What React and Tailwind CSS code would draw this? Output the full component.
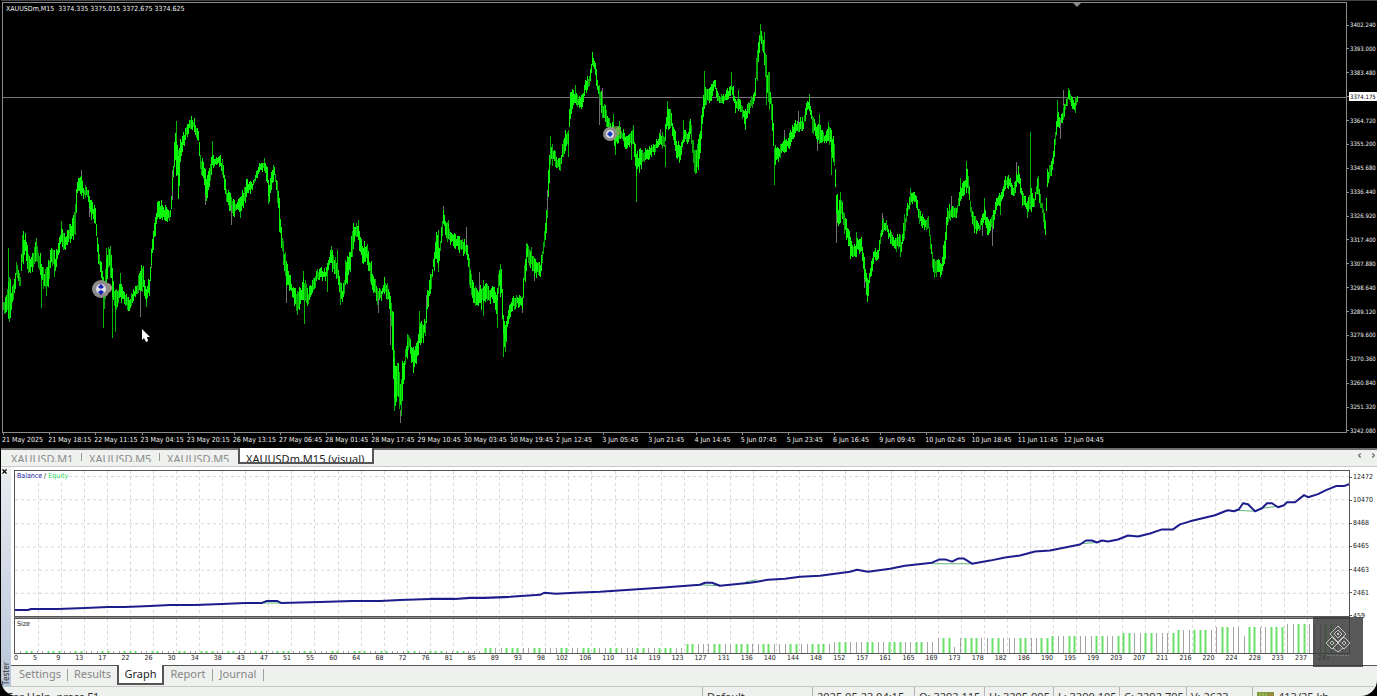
import { ChevronLeft, ChevronRight, X } from "lucide-react";

const PRICES = [
  "3402.240", "3393.000", "3383.480", "3374.175", "3364.720", "3355.200",
  "3345.680", "3336.440", "3326.920", "3317.400", "3307.880", "3298.640",
  "3289.120", "3279.600", "3270.360", "3260.840", "3251.320", "3242.080",
];
const CURRENT_PRICE = "3374.175";

const DATES = [
  "21 May 2025", "21 May 18:15", "22 May 11:15", "23 May 04:15", "23 May 20:15",
  "26 May 13:15", "27 May 06:45", "28 May 01:45", "28 May 17:45", "29 May 10:45",
  "30 May 03:45", "30 May 19:45", "2 Jun 12:45", "3 Jun 05:45", "3 Jun 21:45",
  "4 Jun 14:45", "5 Jun 07:45", "5 Jun 23:45", "6 Jun 16:45", "9 Jun 09:45",
  "10 Jun 02:45", "10 Jun 18:45", "11 Jun 11:45", "12 Jun 04:45",
];

// [x, high, low] envelope of the price bars
const ENVELOPE = [
  [3, 300, 314], [6, 295, 312], [9, 282, 315], [11, 290, 310], [13, 285, 300], [16, 262, 278],
  [20, 275, 287], [22, 237, 262], [25, 234, 252], [28, 255, 272], [31, 258, 270], [35, 245, 262],
  [38, 252, 265], [41, 260, 282], [44, 272, 290], [48, 262, 282], [51, 248, 262], [55, 255, 272],
  [58, 243, 257], [61, 225, 245], [64, 235, 248], [68, 230, 243], [72, 222, 238], [75, 200, 230],
  [77, 180, 192], [80, 172, 190], [83, 188, 197], [87, 187, 198], [90, 200, 215], [95, 210, 222],
  [97, 240, 255], [101, 265, 280], [104, 280, 305], [107, 250, 275], [110, 247, 272], [112, 270, 295],
  [114, 290, 310], [117, 290, 305], [120, 285, 298], [125, 295, 305], [129, 300, 311], [133, 290, 300],
  [137, 283, 293], [140, 270, 290], [143, 270, 288], [146, 290, 303], [149, 275, 293], [151, 250, 262],
  [154, 225, 240], [157, 205, 220], [160, 203, 216], [165, 208, 222], [170, 208, 220], [173, 165, 180],
  [175, 130, 165], [178, 150, 190], [181, 140, 157], [185, 128, 140], [190, 118, 128], [194, 120, 130],
  [198, 133, 142], [200, 155, 170], [203, 160, 180], [206, 180, 200], [209, 165, 185], [212, 155, 168],
  [215, 158, 166], [219, 155, 165], [223, 165, 180], [226, 190, 203], [230, 195, 210], [233, 200, 215],
  [236, 203, 210], [240, 200, 212], [243, 190, 205], [247, 180, 194], [252, 183, 190], [256, 172, 178],
  [260, 163, 170], [264, 162, 170], [267, 170, 185], [269, 185, 200], [272, 170, 182], [274, 168, 176],
  [277, 180, 200], [280, 215, 240], [284, 250, 275], [288, 268, 290], [292, 285, 297], [297, 295, 312],
  [301, 285, 305], [305, 280, 300], [308, 290, 305], [312, 282, 295], [316, 272, 282], [320, 268, 278],
  [325, 270, 280], [330, 252, 262], [334, 255, 275], [338, 270, 285], [342, 288, 300], [346, 265, 285],
  [350, 250, 270], [353, 225, 245], [357, 225, 235], [361, 240, 260], [366, 248, 262], [371, 265, 283],
  [377, 290, 303], [381, 288, 298], [384, 280, 292], [388, 288, 300], [391, 305, 325], [393, 325, 380],
  [395, 370, 400], [398, 365, 395], [400, 380, 413], [403, 360, 385], [406, 345, 360], [409, 335, 350],
  [413, 350, 368], [416, 345, 360], [419, 325, 345], [422, 322, 340], [425, 318, 335], [427, 290, 310],
  [431, 275, 290], [433, 255, 270], [436, 235, 260], [439, 250, 262], [443, 210, 225], [447, 225, 240],
  [452, 232, 244], [457, 238, 248], [462, 240, 252], [467, 245, 258], [469, 260, 280], [473, 285, 300],
  [478, 290, 304], [482, 285, 305], [487, 288, 302], [492, 287, 300], [496, 293, 310], [499, 270, 290],
  [501, 275, 300], [503, 315, 340], [505, 320, 345], [508, 308, 325], [512, 298, 310], [517, 297, 305],
  [522, 298, 308], [524, 265, 285], [527, 245, 262], [531, 250, 265], [535, 260, 275], [540, 265, 275],
  [542, 250, 262], [546, 215, 232], [548, 170, 200], [550, 143, 165], [553, 148, 160], [557, 160, 170],
  [560, 160, 170], [563, 140, 155], [566, 130, 145], [568, 130, 150], [570, 95, 115], [573, 90, 103],
  [577, 98, 108], [582, 96, 106], [585, 82, 92], [589, 76, 86], [592, 55, 66], [595, 62, 75],
  [598, 85, 98], [602, 98, 115], [606, 112, 125], [610, 122, 135], [615, 130, 145], [620, 127, 137],
  [625, 135, 147], [630, 136, 146], [633, 130, 145], [636, 155, 175], [640, 152, 168], [645, 150, 160],
  [650, 147, 156], [655, 142, 152], [660, 133, 142], [664, 135, 150], [667, 107, 125], [671, 115, 128],
  [676, 140, 155], [680, 148, 160], [684, 128, 140], [687, 135, 145], [690, 122, 135], [694, 150, 168],
  [697, 150, 172], [700, 130, 150], [703, 95, 115], [706, 90, 103], [710, 90, 102], [714, 78, 88],
  [718, 95, 103], [724, 96, 102], [728, 88, 98], [731, 80, 92], [735, 98, 110], [740, 102, 112],
  [745, 112, 125], [750, 100, 110], [754, 90, 102], [757, 50, 75], [760, 28, 45], [763, 42, 55],
  [766, 65, 90], [769, 80, 100], [772, 108, 130], [774, 145, 165], [778, 150, 160], [783, 140, 152],
  [788, 138, 148], [793, 125, 138], [798, 120, 132], [803, 120, 130], [806, 100, 112], [809, 98, 108],
  [812, 115, 130], [816, 127, 140], [820, 125, 140], [824, 135, 143], [828, 128, 138], [831, 130, 150],
  [834, 145, 170], [836, 190, 215], [838, 205, 228], [841, 200, 215], [844, 215, 230], [848, 230, 245],
  [850, 237, 255], [854, 245, 260], [857, 238, 250], [861, 240, 252], [864, 260, 280], [867, 280, 298],
  [870, 265, 280], [874, 250, 260], [878, 250, 258], [882, 220, 232], [886, 222, 230], [890, 233, 243],
  [894, 240, 250], [898, 235, 248], [901, 240, 252], [904, 218, 240], [907, 205, 215], [911, 193, 203],
  [915, 193, 203], [919, 212, 222], [924, 218, 228], [928, 218, 228], [931, 240, 255], [933, 262, 275],
  [937, 262, 275], [941, 262, 275], [945, 235, 255], [947, 208, 222], [951, 207, 217], [956, 208, 216],
  [960, 188, 200], [964, 182, 195], [967, 165, 185], [970, 200, 212], [974, 218, 230], [979, 223, 232],
  [984, 210, 222], [987, 220, 232], [992, 215, 230], [996, 198, 210], [1000, 195, 205], [1005, 178, 188],
  [1009, 177, 187], [1013, 188, 198], [1018, 168, 180], [1022, 190, 205], [1027, 203, 213], [1030, 190, 210],
  [1034, 195, 208], [1037, 180, 192], [1042, 205, 215], [1045, 218, 232], [1047, 170, 190], [1052, 158, 170],
  [1054, 140, 155], [1057, 110, 125], [1060, 117, 128], [1064, 105, 115], [1068, 90, 102], [1071, 95, 105],
  [1074, 103, 110], [1077, 95, 102],
];

// single long wicks
const GREEN_WICKS = [
  [8, 248, 290], [9, 300, 321], [22, 235, 262], [36, 238, 255], [41, 270, 308], [46, 280, 296],
  [54, 262, 277], [61, 221, 240], [103, 290, 328], [106, 248, 275], [110, 246, 275], [112, 280, 338],
  [115, 290, 332], [120, 273, 290], [146, 290, 307], [176, 121, 150], [178, 150, 192], [212, 141, 160],
  [240, 200, 218], [264, 158, 166], [268, 185, 204], [273, 165, 175], [297, 295, 315], [304, 285, 324],
  [303, 271, 290], [331, 246, 258], [327, 265, 292], [337, 250, 272], [340, 285, 305], [345, 260, 280],
  [358, 220, 235], [367, 244, 258], [384, 277, 288], [394, 350, 411], [397, 363, 390], [401, 380, 416],
  [407, 334, 348], [419, 311, 330], [438, 230, 250], [438, 255, 272], [448, 220, 235], [483, 280, 316],
  [497, 290, 328], [500, 264, 290], [503, 320, 357], [505, 330, 352], [526, 243, 260], [550, 136, 155],
  [568, 130, 157], [575, 85, 100], [592, 52, 64], [613, 114, 135], [615, 140, 155], [619, 121, 135],
  [631, 140, 160], [633, 125, 140], [636, 165, 202], [665, 145, 167], [667, 101, 120], [679, 150, 163],
  [683, 120, 136], [689, 121, 135], [695, 165, 174], [704, 71, 100], [731, 72, 90], [738, 90, 108],
  [745, 118, 130], [760, 24, 40], [764, 32, 60], [766, 55, 105], [769, 72, 110], [774, 150, 185],
  [809, 94, 106], [819, 114, 135], [831, 140, 175], [828, 122, 138], [840, 192, 212], [856, 232, 248],
  [867, 285, 301], [900, 242, 257], [910, 188, 200], [934, 262, 278], [966, 161, 180], [960, 178, 198],
  [984, 198, 215], [1000, 195, 215], [1018, 166, 180], [1030, 132, 205], [1027, 205, 218], [1038, 176, 192],
  [1045, 220, 235], [1057, 100, 122], [1068, 88, 98], [1075, 98, 113],
];
const GRAY_WICKS = [
  [81, 170, 178], [89, 200, 217], [140, 285, 317], [151, 250, 268], [172, 170, 200], [205, 195, 205],
  [231, 205, 225], [286, 265, 303], [378, 298, 313], [390, 315, 345], [400, 410, 423], [426, 295, 318],
  [443, 206, 214], [466, 227, 245], [479, 272, 290], [522, 302, 313], [534, 265, 281], [547, 190, 210],
  [599, 98, 125], [602, 88, 98], [660, 129, 138], [784, 130, 145], [798, 111, 124], [817, 135, 151],
  [836, 205, 243], [864, 270, 288], [882, 213, 226], [951, 196, 210], [992, 225, 246], [982, 225, 236],
  [1016, 162, 175], [1060, 120, 139], [1063, 90, 106],
];

const noise = (n) => {
  const v = Math.sin(n * 127.1) * 43758.5453;
  return v - Math.floor(v);
};

const buildBars = () => {
  let bright = "";
  let dark = "";
  let i = 0;
  for (let x = 3; x <= 1077; x++) {
    while (i < ENVELOPE.length - 2 && x > ENVELOPE[i + 1][0]) i++;
    const [x0, h0, l0] = ENVELOPE[i];
    const [x1, h1, l1] = ENVELOPE[i + 1];
    const t = (x - x0) / (x1 - x0);
    const high = h0 + (h1 - h0) * t;
    const low = l0 + (l1 - l0) * t;
    const range = low - high;
    const top = Math.round(high + (noise(x) - 0.5) * range * 0.55);
    const bottom = Math.round(low - (noise(x + 5000) - 0.5) * range * 0.55);
    const seg = `M${x + 0.5} ${top}V${Math.max(bottom, top + 4)}`;
    if (noise(x + 900) > 0.25) bright += seg;
    else dark += seg;
  }
  return { bright, dark };
};

const BARS = buildBars();
const wickPath = (wicks) => wicks.map(([x, a, b]) => `M${x + 0.5} ${a}V${b}`).join("");

const BALANCE = [
  [14, 609], [28, 609], [31, 608], [38, 608], [58, 608], [85, 607], [108, 606], [125, 606], [150, 605],
  [170, 604], [195, 604], [222, 603], [245, 602], [262, 602], [267, 600], [277, 600], [281, 602],
  [320, 601], [352, 600], [380, 600], [400, 599], [430, 598], [455, 598], [470, 597], [485, 597],
  [510, 596], [540, 594], [544, 592], [556, 593], [575, 592], [600, 591], [630, 589], [660, 587],
  [700, 584], [705, 582], [712, 582], [720, 585], [730, 584], [750, 582], [757, 581], [768, 579],
  [785, 578], [800, 576], [820, 575], [835, 573], [850, 571], [857, 569], [868, 571], [890, 568],
  [905, 565], [932, 562], [939, 559], [946, 559], [952, 561], [958, 558], [964, 558], [972, 563],
  [990, 560], [1005, 557], [1020, 555], [1035, 551], [1050, 550], [1070, 546], [1080, 544], [1086, 540],
  [1092, 540], [1097, 542], [1102, 540], [1108, 541], [1118, 539], [1128, 535], [1138, 536], [1150, 533],
  [1162, 529], [1173, 529], [1180, 524], [1190, 521], [1215, 515], [1225, 511], [1228, 510], [1234, 511],
  [1239, 509], [1243, 503], [1248, 504], [1255, 511], [1262, 508], [1267, 503], [1272, 503], [1278, 507],
  [1284, 505], [1287, 502], [1295, 502], [1304, 495], [1308, 497], [1318, 494], [1326, 490], [1336, 486],
  [1344, 486], [1349, 484],
];
const BALANCE_LINE = BALANCE.map((p) => p.join(",")).join(" ");
const EQUITY_DIPS =
  "M262 602H281M700 584L720 585M932 563L972 563M1083 543L1097 542M1236 510L1255 511M1262 508L1278 506M746 581L757 579";

const BALANCE_SCALE = ["12472", "10470", "8468", "6465", "4463", "2461", "459"];

const TRADES = [
  5, 9, 13, 17, 22, 26, 30, 34, 38, 43, 47, 51, 55, 60, 64, 68, 72, 76, 81, 85, 89, 93, 98, 102, 106,
  110, 114, 119, 123, 127, 131, 136, 140, 144, 148, 152, 157, 161, 165, 169, 173, 178, 182, 186, 190,
  195, 199, 203, 207, 211, 216, 220, 224, 228, 233, 237, 241,
];

// [from x, bar height]
const SIZE_STEPS = [
  [0, 2], [484, 5], [684, 9], [832, 11], [935, 15], [953, 6], [957, 15], [1050, 17],
  [1121, 20], [1176, 23], [1215, 26], [1242, 17], [1247, 26], [1285, 29],
];
const WIN_PATTERN = "00011001110011";

const buildSizes = () => {
  let wins = "";
  let losses = "";
  for (let i = 1; i < 244; i++) {
    const x = Math.round(15 + i * 5.46);
    const height = SIZE_STEPS.filter(([from]) => x >= from).pop()[1];
    const seg = `M${x + 0.5} 652V${652 - height}`;
    if (WIN_PATTERN[(i + 1) % 14] === "1") wins += seg;
    else losses += seg;
  }
  return { wins, losses };
};
const SIZES = buildSizes();

const GRID_X = TRADES.map((_, i) => Math.round(37.5 + i * 23.08));
const GRID_Y = [476, 499, 523, 546, 569, 592];

const FILES = ["XAUUSD,M1", "XAUUSD,M5", "XAUUSD,M5"];

function PriceChart() {
  return (
    <section className="flex min-h-0 flex-1 flex-col border-t border-[#444] bg-black pl-px pt-px text-[7px] leading-3 text-[#f0f0f0] font-['DejaVu_Sans_Condensed','DejaVu_Sans',sans-serif]">
      <div className="flex min-h-0 flex-1">
        <div className="relative min-w-0 flex-1 border border-[#8c8c8c]">
          <svg
            className="block h-full w-full"
            viewBox="3 3 1343 429"
            preserveAspectRatio="none"
          >
            <path d="M3 97.5H1347" stroke="#777" />
            <path d={BARS.dark} stroke="#08a808" />
            <path d={wickPath(GRAY_WICKS)} stroke="#6f6f6f" />
            <path d={wickPath(GREEN_WICKS)} stroke="#06b806" />
            <path d={BARS.bright} stroke="#0af60a" />
            <path d="M1073 3h8l-4 4z" fill="#8c8c8c" />

            {/* Trade markers */}
            <circle cx="107" cy="288" r="5" fill="#a89a80" />
            <circle cx="101" cy="289" r="9" fill="#8f8b88" />
            <circle cx="101" cy="289" r="5" fill="#dcdcec" />
            <path d="M101 284l3 3-3 2-3-2zM101 290l3 2-3 3-3-3z" fill="#1420b4" />
            <circle cx="616" cy="131" r="5" fill="#8d9a60" fillOpacity="0.7" />
            <circle cx="610" cy="134" r="7" fill="#8f8b88" />
            <circle cx="610" cy="134" r="4" fill="#dcdcec" />
            <path d="M610 131l3 3-3 3-3-3z" fill="#1838c0" />

            {/* Mouse pointer */}
            <path d="M142 329v11l2-2 2 4 2-1-1-4h3z" fill="#fff" />
          </svg>
          <div className="absolute left-[3px] top-0 whitespace-pre">
            XAUUSDm,M15  3374.335 3375.015 3372.675 3374.625
          </div>
        </div>

        {/* Price scale */}
        <div className="-mb-1 flex w-[30px] flex-col justify-between pt-[17px] text-[6px]">
          {PRICES.map((price) => (
            <div key={price} className="flex h-3 items-center">
              <span className="h-px w-[2px] shrink-0 bg-[#8c8c8c]" />
              <span
                className={
                  price === CURRENT_PRICE
                    ? "flex-1 bg-white pl-px leading-[9px] text-black"
                    : "pl-px"
                }
              >
                {price}
              </span>
            </div>
          ))}
        </div>
      </div>

      {/* Time scale */}
      <div className="grid h-[15px] grid-cols-[1108fr_267fr] leading-[10px]">
        <div className="grid grid-cols-[repeat(24,minmax(0,1fr))]">
          {DATES.map((date) => (
            <div key={date} className="whitespace-nowrap">
              <div className="ml-px h-[2px] w-px bg-[#8c8c8c]" />
              {date}
            </div>
          ))}
        </div>
      </div>
    </section>
  );
}

function ChartTabs() {
  return (
    <nav className="flex h-[19px] shrink-0 items-start border-b border-[#c8cac8] bg-[#eff1ef] text-[11px]">
      <div className="flex h-4 flex-1 border-t-2 border-[#6e6e6e] pl-[3px]">
        {FILES.map((file, i) => (
          <button
            key={i}
            className="flex h-3 w-[78px] overflow-hidden pl-[7px] leading-4 text-[#8c8c8c]"
          >
            <span className="flex-1 pt-px text-left">{file}</span>
            {i < FILES.length - 1 && <span className="mt-[3px] h-2 w-px bg-[#9a9a9a]" />}
          </button>
        ))}
        <button className="-mt-[2px] h-4 w-[136px] overflow-hidden whitespace-nowrap border-2 border-t-0 border-[#555] bg-white pl-[6px] pt-[3px] text-left leading-4 text-[#222]">
          XAUUSDm,M15 (visual)
        </button>
        <div className="ml-auto flex items-start gap-[7px] pt-[2px]">
          <button aria-label="Scroll tabs left">
            <ChevronLeft className="block h-[7px] w-[7px] text-[#666]" strokeWidth={4} />
          </button>
          <button aria-label="Scroll tabs right">
            <ChevronRight className="block h-[7px] w-[7px] text-[#666]" strokeWidth={4} />
          </button>
        </div>
      </div>
    </nav>
  );
}

function TesterGraph() {
  return (
    <div className="flex min-h-0 flex-1 flex-col bg-white pl-[3px] pt-[3px] text-[7px] leading-3 text-[#222] font-['DejaVu_Sans_Condensed','DejaVu_Sans',sans-serif]">
      <div className="flex min-h-0 flex-1">
        <div className="flex min-w-0 flex-1 flex-col gap-px bg-[#888]">
          <div className="relative min-h-0 flex-1 border border-[#555] bg-white">
            <svg
              className="block h-full w-full"
              viewBox="15 471 1334 144"
              preserveAspectRatio="none"
            >
              <g stroke="#d8d8d8" strokeDasharray="3 3">
                {GRID_X.map((x) => (
                  <path key={x} d={`M${x + 0.5} 471V615`} />
                ))}
                {GRID_Y.map((y) => (
                  <path key={y} d={`M15 ${y + 0.5}H1349`} />
                ))}
              </g>
              <path d={EQUITY_DIPS} fill="none" stroke="#5fb878" />
              <polyline
                points={BALANCE_LINE}
                fill="none"
                stroke="#1c1c8c"
                strokeWidth="2"
                strokeLinejoin="round"
              />
            </svg>
            <div className="absolute left-[2px] top-0 bg-white leading-[11px]">
              <span className="text-[#1414a0]">Balance</span> /{" "}
              <span className="text-[#28d25a]">Equity</span>
            </div>
          </div>
          <div className="relative h-9 border border-[#555] bg-white">
            <svg
              className="block h-full w-full"
              viewBox="15 618 1334 34"
              preserveAspectRatio="none"
            >
              <g stroke="#d8d8d8" strokeDasharray="3 3">
                {GRID_X.map((x) => (
                  <path key={x} d={`M${x + 0.5} 618V652`} />
                ))}
              </g>
              <path d={SIZES.losses} stroke="#a4a4a4" />
              <path d={SIZES.wins} stroke="#6ae06a" strokeWidth="2" />
            </svg>
            <div className="absolute left-[2px] top-0 leading-[10px]">Size</div>
          </div>
        </div>

        {/* Balance scale */}
        <div className="mb-8 flex w-[27px] flex-col justify-between pt-px">
          {BALANCE_SCALE.map((value) => (
            <div key={value} className="flex h-3 items-center">
              <span className="h-px w-[2px] bg-[#555]" />
              <span className="pl-px">{value}</span>
            </div>
          ))}
        </div>
      </div>

      {/* Trade numbers */}
      <div className="grid h-[11px] grid-cols-[1316fr_47fr] leading-[8px]">
        <div className="grid grid-cols-[repeat(57,minmax(0,1fr))]">
          {TRADES.map((trade, i) => (
            <div key={trade} className="flex justify-end">
              {i === 0 && <span className="mr-auto">0</span>}
              <span>{trade}</span>
            </div>
          ))}
        </div>
      </div>
    </div>
  );
}

function TesterTabs() {
  const idle = "h-4 text-[#858585]";
  const divider = <span className="mt-[3px] h-3 w-px bg-[#a0a0a0]" />;
  return (
    <nav className="flex h-[22px] items-start border-y border-t-[#555] border-b-[#c8cac8] bg-[#eff1ef] pl-[2px] text-[11px] leading-4">
      <button className={`w-[54px] ${idle}`}>Settings</button>
      {divider}
      <button className={`w-[49px] ${idle}`}>Results</button>
      <button className="-mt-px h-5 w-[47px] border-2 border-t-0 border-[#555] bg-white text-[#222]">
        Graph
      </button>
      <button className={`w-12 ${idle}`}>Report</button>
      {divider}
      <button className={`w-[50px] ${idle}`}>Journal</button>
      {divider}
    </nav>
  );
}

function Tester() {
  return (
    <section className="relative flex h-[220px] shrink-0">
      <aside className="flex w-[10px] flex-col justify-between bg-gradient-to-b from-[#e8ecf2] to-[#b9c6d8]">
        <button aria-label="Close tester" className="h-2 bg-[#eff1ef]">
          <X className="h-[7px] w-[7px] text-black" strokeWidth={4} />
        </button>
        <span className="rotate-180 pt-[2px] text-[8px] leading-[10px] text-[#333] [writing-mode:vertical-rl]">
          Tester
        </span>
      </aside>
      <div className="flex min-w-0 flex-1 flex-col">
        <TesterGraph />
        <TesterTabs />
      </div>

      {/* Watermark */}
      <div className="absolute right-[14px] top-[150px] flex h-[50px] w-[50px] items-center justify-center bg-[#3c3c3c]/85">
        <svg className="h-[34px] w-[28px]" viewBox="0 0 28 34" fill="none" stroke="#c4c4c4">
          <path d="M14 1l8 8-8 8-8-8zM14 5l4 4-4 4-4-4zM14 8l1 1-1 1-1-1z" />
          <path d="M8 12l6 6-6 6-6-6zM20 12l6 6-6 6-6-6z" />
          <path d="M8 16l2 2-2 2-2-2zM20 16l2 2-2 2-2-2zM14 18l5 5-5 4-5-4z" />
          <path d="M3 30.5h22" stroke="#777" strokeDasharray="2 1" />
        </svg>
      </div>
    </section>
  );
}

function StatusBar() {
  const cell = "h-5 shrink-0 border-l border-[#b4b4b4] pl-1";
  return (
    <footer className="flex h-[9px] shrink-0 items-start overflow-hidden whitespace-nowrap bg-[#eff1ef] text-[11px] leading-5 text-[#333]">
      <div className="min-w-0 flex-1 pl-[6px]">For Help, press F1</div>
      <div className={`w-[110px] ${cell}`}>Default</div>
      <div className={`w-[102px] ${cell}`}>2025.05.23 04:15</div>
      <div className={`w-[70px] ${cell}`}>O: 3292.115</div>
      <div className={`w-[69px] ${cell}`}>H: 3295.995</div>
      <div className={`w-[66px] ${cell}`}>L: 3290.105</div>
      <div className={`w-[67px] ${cell}`}>C: 3292.795</div>
      <div className={`w-[66px] ${cell}`}>V: 2623</div>
      <div className={`flex w-[125px] gap-1 ${cell}`}>
        <svg className="mt-[5px] h-3 w-[17px]" viewBox="0 0 17 12">
          <path d="M0 0h17v12H0z" fill="#7c9a3c" />
          <path d="M3 1v11M6 1v11M9 1v11" stroke="#b4cc70" />
          <path d="M12 1v11M15 1v11" stroke="#c86a3c" />
        </svg>
        413/25 kb
      </div>
    </footer>
  );
}

export default function App() {
  return (
    <div className="h-screen bg-black pl-px font-['Noto_Sans',sans-serif]">
      <main className="flex h-full flex-col overflow-hidden rounded-b-2xl">
        <PriceChart />
        <ChartTabs />
        <Tester />
        <StatusBar />
      </main>
    </div>
  );
}
